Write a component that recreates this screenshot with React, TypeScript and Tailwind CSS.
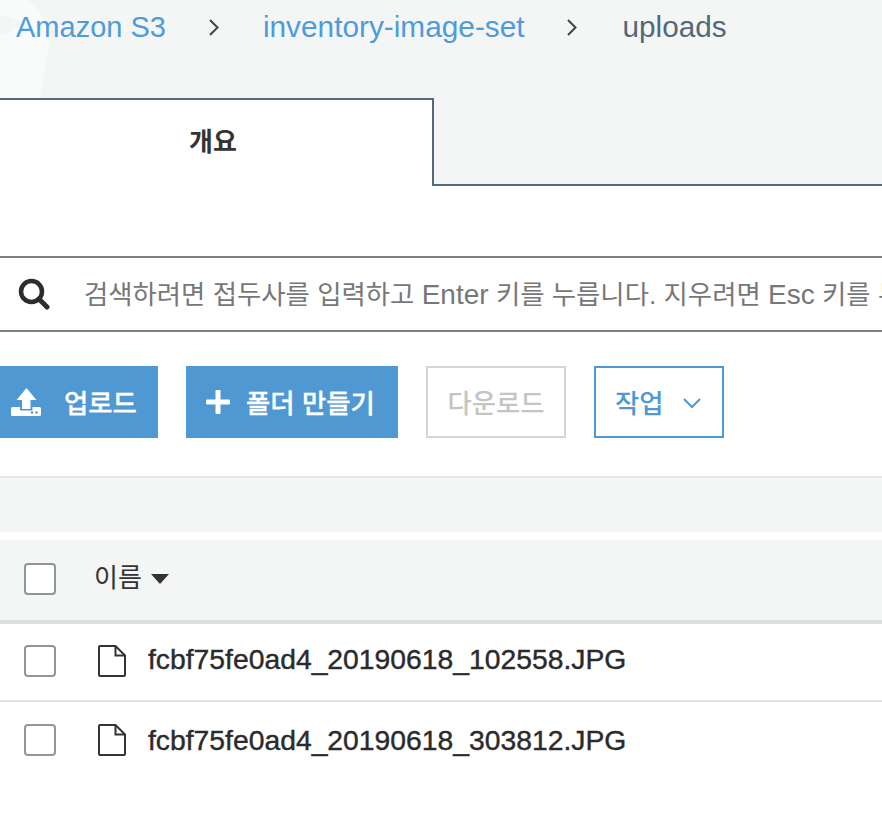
const font = "font-['Liberation_Sans','Noto_Sans_CJK_KR',sans-serif]";

function Upload() {
  return (
    <svg width="30" height="28" viewBox="0 0 30 28" className="shrink-0">
      <path fill="#fff" d="M15.5 0 L25.5 12 H19.5 V21 H11 V12 H5.5 Z" />
      <path fill="#fff" d="M1.5 19 H9 V22.5 H21.5 V19 H28.5 Q30 19 30 20.5 V26.5 Q30 28 28.5 28 H1.5 Q0 28 0 26.5 V20.5 Q0 19 1.5 19 Z" />
      <circle cx="21" cy="24.5" r="1.2" fill="#4f98d2" />
      <circle cx="25.5" cy="24.5" r="1.2" fill="#4f98d2" />
    </svg>
  );
}

function Plus() {
  return (
    <svg width="26" height="26" viewBox="0 0 26 26" className="shrink-0">
      <path fill="#fff" d="M10.5 2 Q10.5 1 11.5 1 H14.5 Q15.5 1 15.5 2 V10.5 H24 Q25 10.5 25 11.5 V14.5 Q25 15.5 24 15.5 H15.5 V24 Q15.5 25 14.5 25 H11.5 Q10.5 25 10.5 24 V15.5 H2 Q1 15.5 1 14.5 V11.5 Q1 10.5 2 10.5 H10.5 Z" />
    </svg>
  );
}

function FileIcon() {
  return (
    <svg width="28" height="32" viewBox="0 0 28 32" fill="none" stroke="#333" strokeWidth="2" className="shrink-0">
      <path d="M2 1 H17.5 L27 10.5 V30 Q27 31 26 31 H2 Q1 31 1 30 V2 Q1 1 2 1 Z" />
      <path d="M17.5 1 V10.5 H27" />
    </svg>
  );
}

function Chevron({ className }: { className: string }) {
  return (
    <svg width="10" height="17" viewBox="0 0 10 17" fill="none" stroke="#444" strokeWidth="2" className={className}>
      <path d="M1 1 L8.5 8.5 L1 16" />
    </svg>
  );
}

function Check() {
  return <div className="w-8 h-8 shrink-0 rounded-[4px] border-2 border-[#8f9699] bg-white" />;
}

function Row({ name, first }: { name: string; first?: boolean }) {
  return (
    <div className={`flex items-center h-[78px] pl-6 pb-[2px] ${first ? "border-b-2 border-[#dfe1e2]" : ""}`}>
      <Check />
      <div className="ml-[42px]"><FileIcon /></div>
      <span className={`ml-[22px] text-[28.3px] leading-none text-[#2b2b2b] [-webkit-text-stroke:0.4px_#2b2b2b] ${first ? "pb-[3px]" : "pb-0"}`}>{name}</span>
    </div>
  );
}

export default function App() {
  return (
    <div className={`${font} w-[882px] h-[820px] bg-white overflow-hidden`}>
      <div className="relative bg-[#f4f6f6] h-[186px]">
        <svg width="60" height="98" viewBox="0 0 60 98" className="absolute left-0 top-0">
          <path d="M0 0 H28 Q46 14 50 36 L40 98 H0 Z" fill="#f9fbfb" />
          <path d="M0 15 Q14 17 22 24 Q14 31 0 35 Z" fill="#f4f6f6" />
        </svg>
        <nav className="relative flex items-center h-[54px] pl-4 leading-none">
          <span className="text-[29px] text-[#4f9bd9]">Amazon S3</span>
          <Chevron className="ml-[43px]" />
          <span className="ml-[44px] text-[29.8px] text-[#4f9bd9]">inventory-image-set</span>
          <Chevron className="ml-[42px]" />
          <span className="ml-[46px] text-[29.7px] text-[#536878]">uploads</span>
        </nav>
        <div className="relative mt-[44px] flex h-[88px]">
          <div className="w-[434px] h-[88px] bg-white border-t-2 border-r-2 border-[#546b7b] flex items-center justify-center">
            <span className="font-bold text-[26px] text-[#333] pr-[6px] pb-[2px]">개요</span>
          </div>
          <div className="flex-1 border-b-2 border-[#546b7b]" />
        </div>
      </div>

      <div className="mt-[70px] h-[76px] border-y-2 border-[#7f7f7f] flex items-center pl-[18px] overflow-hidden">
        <svg width="32" height="32" viewBox="0 0 32 32" fill="none" stroke="#2d2d2d" className="shrink-0">
          <circle cx="13.5" cy="13.5" r="10.5" strokeWidth="4.5" />
          <path d="M21 21 L29 29" strokeWidth="5" strokeLinecap="round" />
        </svg>
        <span className="ml-[34px] pt-[2px] text-[26.4px] leading-none text-[#777] whitespace-nowrap">
          검색하려면 접두사를 입력하고 <span className="text-[28px]">Enter</span> 키를 누릅니다. 지우려면 <span className="text-[28px]">Esc</span> 키를 누릅니다.
        </span>
      </div>

      <div className="mt-[34px] flex h-[72px]">
        <div className="w-[158px] bg-[#4f98d2] flex items-center pl-[11px] text-white">
          <Upload />
          <span className="ml-[23px] pt-[6px] text-[26.4px] font-medium [-webkit-text-stroke:0.3px_#fff]">업로드</span>
        </div>
        <div className="ml-[28px] w-[212px] bg-[#4f98d2] flex items-center pl-[19px] text-white">
          <Plus />
          <span className="ml-[15px] pt-[6px] text-[26.4px] font-medium whitespace-nowrap [-webkit-text-stroke:0.3px_#fff]">폴더 만들기</span>
        </div>
        <div className="ml-[28px] w-[140px] border-2 border-[#d5d5d5] flex items-center justify-center pt-[6px] text-[26.4px] font-medium text-[#c4c4c4]">다운로드</div>
        <div className="ml-[28px] w-[130px] border-2 border-[#4f98d2] flex items-center pl-[19px] text-[#4f98d2]">
          <span className="pt-[6px] text-[26.4px] font-medium">작업</span>
          <svg width="20" height="14" viewBox="0 0 20 14" fill="none" stroke="#4f98d2" strokeWidth="2" className="ml-[18px] mt-[2px]"><path d="M2 3 L10 11 L18 3" /></svg>
        </div>
      </div>

      <div className="mt-[38px] h-[56px] bg-[#f4f6f6] border-t-2 border-[#e4e6e6]" />

      <div className="mt-[8px] h-[84px] bg-[#f4f6f6] border-b-4 border-[#dedfdf] flex items-center pl-6 pb-[2px]">
        <Check />
        <span className="ml-[38px] pb-[2px] text-[26px] text-[#333]">이름</span>
        <svg width="20" height="12" viewBox="0 0 20 12" className="ml-[8px]"><path d="M1 1 H19 L10 11 Z" fill="#333" /></svg>
      </div>

      <Row first name="fcbf75fe0ad4_20190618_102558.JPG" />
      <Row name="fcbf75fe0ad4_20190618_303812.JPG" />
    </div>
  );
}
